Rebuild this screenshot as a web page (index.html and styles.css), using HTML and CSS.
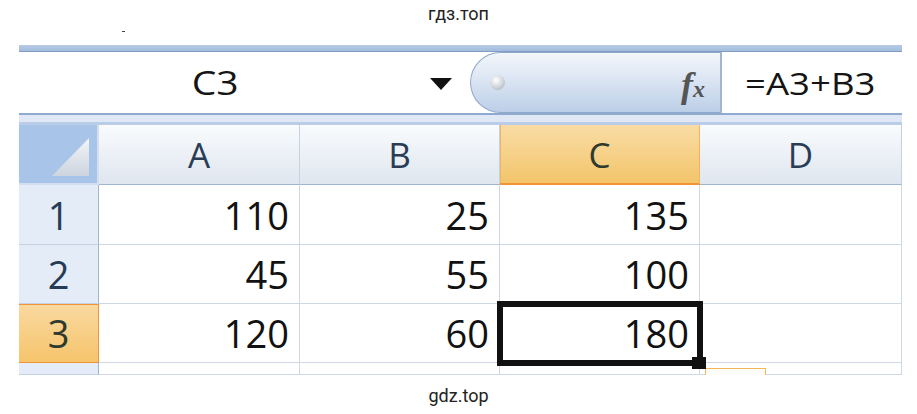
FILE: index.html
```html
<!DOCTYPE html>
<html lang="ru">
<head>
  <meta charset="UTF-8" />
  <meta name="viewport" content="width=device-width, initial-scale=1" />
  <title>гдз.топ — формула в ячейке C3</title>
  <link rel="stylesheet" href="styles.css">
</head>
<body>

  <div class="head">
    <div class="site-mark">гдз.топ</div>
    <div class="tick"></div>
  </div>

  <div class="sheet">
    <div class="topbar"></div>

    <!-- Name box + formula bar -->
    <div class="formula-bar">
      <div class="name-box"><span class="wide">C3</span></div>
      <div class="name-arrow"><span class="arrow"></span></div>
      <div class="fx-pill">
        <span class="dot"></span>
        <span class="fx">f<span class="fx-x">x</span></span>
      </div>
      <div class="formula"><span class="wide">=A3+B3</span></div>
    </div>

    <div class="band"></div>

    <!-- Grid -->
    <div class="grid">
      <div class="corner"><span class="corner-tri"></span></div>
      <div class="ch">A</div>
      <div class="ch">B</div>
      <div class="ch active">C</div>
      <div class="ch">D</div>

      <div class="rh">1</div>
      <div class="cell">110</div>
      <div class="cell">25</div>
      <div class="cell">135</div>
      <div class="cell"></div>

      <div class="rh">2</div>
      <div class="cell">45</div>
      <div class="cell">55</div>
      <div class="cell">100</div>
      <div class="cell"></div>

      <div class="rh active">3</div>
      <div class="cell">120</div>
      <div class="cell">60</div>
      <div class="cell selected">180</div>
      <div class="cell"></div>

      <div class="rh"></div>
      <div class="cell"></div>
      <div class="cell"></div>
      <div class="cell"></div>
      <div class="cell"></div>

      <!-- autofill options button, mostly cut off -->
      <div class="fill-options"></div>
    </div>
  </div>

  <div class="site-mark foot">gdz.top</div>

</body>
</html>
```

FILE: styles.css
```css
body {
  margin: 0;
  background: #fff;
  font-family: "Open Sans", "Liberation Sans", sans-serif;
}
.site-mark {
  font-family: Roboto, "Liberation Sans", sans-serif;
  font-size: 18px;
  line-height: 21px;
  color: #222;
  text-align: center;
}
.head {
  height: 45px;
  padding-top: 3px;
  box-sizing: border-box;
}
.tick {
  width: 3px;
  height: 1px;
  margin: 7px 0 0 122px;
  background: #444;
}
.foot {
  margin-top: 10px;
}

.sheet {
  width: 883px;
  margin-left: 19px;
  overflow: hidden;
}
.topbar {
  height: 6px;
  background: linear-gradient(#b7cbe6, #a3bcdd);
  border-bottom: 1px solid #7f9dc5;
}

/* Formula bar */
.formula-bar {
  display: flex;
  height: 61px;
  background: #fff;
}
.wide {
  display: inline-block;
  transform: scaleX(1.22);
}
.name-box {
  width: 392px;
  display: flex;
  align-items: center;
  justify-content: center;
  font-size: 32px;
  color: #151515;
}
.name-arrow {
  width: 59px;
  display: flex;
  align-items: center;
  justify-content: center;
  padding-top: 2px;
  box-sizing: border-box;
}
.arrow {
  width: 0;
  height: 0;
  border-left: 11px solid transparent;
  border-right: 11px solid transparent;
  border-top: 12px solid #111;
}
.fx-pill {
  width: 250px;
  display: flex;
  align-items: center;
  justify-content: space-between;
  padding: 0 15px 0 19px;
  box-sizing: border-box;
  border: 1px solid #90a9cb;
  border-right: none;
  border-radius: 31px 0 0 31px;
  background: linear-gradient(#f2f6fb, #dbe5f3 45%, #bccfe8);
}
.dot {
  width: 15px;
  height: 15px;
  border-radius: 50%;
  background: radial-gradient(circle at 40% 35%, #ffffff, #cfd3d9 55%, #9ea4ad);
}
.fx {
  font-family: "Liberation Serif", serif;
  font-style: italic;
  font-weight: bold;
  font-size: 36px;
  color: #555;
  line-height: 1;
  margin-top: 4px;
}
.fx-x {
  font-size: 24px;
}
.formula {
  flex: 1;
  display: flex;
  align-items: center;
  padding-left: 33px;
  border-left: 2px solid #a3b6cf;
  font-size: 31px;
  color: #141414;
}
.formula .wide {
  transform: scaleX(1.18);
}

.band {
  height: 12px;
  background: linear-gradient(#8eaacf 0 2px, #dfe8f4 2px 9px, #b9cde8 9px);
}

/* Sheet grid */
.grid {
  position: relative;
  display: grid;
  grid-template-columns: 80px 201px 200px 200px 202px;
  grid-template-rows: 60px 60px 59px 59px 12px;
}
.grid > div {
  box-sizing: border-box;
  display: flex;
  align-items: center;
}
.corner {
  justify-content: flex-end;
  align-items: flex-end !important;
  padding: 0 8px 7px 0;
  background: #a9c4e9;
  border-right: 2px solid #d2dff0;
  border-bottom: 2px solid #d2dff0;
}
.corner-tri {
  width: 37px;
  height: 38px;
  clip-path: polygon(100% 0, 100% 100%, 0 100%);
  background: linear-gradient(#f3f5f8, #cdd4de);
}
.ch {
  justify-content: center;
  font-size: 35px;
  color: #2a3d57;
  background: linear-gradient(#f9fbfd, #dfe6ef);
  border-right: 1px solid #c5d2e3;
  border-bottom: 1px solid #9eb6ce;
}
.ch.active {
  color: #2f3a2e;
  background: linear-gradient(#f9dca5, #f3c56b);
  border-right: 1px solid #f0b45c;
  border-bottom: 2px solid #f29436;
  box-shadow: inset 1px 0 #f0b45c;
}
.rh {
  justify-content: center;
  font-size: 38px;
  color: #263b55;
  background: #e4ecf7;
  border-right: 1px solid #9eb6ce;
  border-bottom: 1px solid #c5d2e3;
}
.rh.active {
  color: #2f3a2e;
  background: linear-gradient(#f9d9a0, #f6c46c);
  border-right: 1px solid #f29436;
  border-bottom: 1px solid #f29436;
  box-shadow: inset 0 1px #f29436;
}
.cell {
  justify-content: flex-end;
  padding-right: 10px;
  font-size: 38px;
  color: #111;
  background: #fff;
  border-right: 1px solid #d0d7e5;
  border-bottom: 1px solid #d0d7e5;
}
.cell.selected {
  position: relative;
}
.cell.selected::after {
  content: "";
  position: absolute;
  top: -3px;
  left: -3px;
  right: -4px;
  bottom: -4px;
  border: 6px solid #111;
  z-index: 2;
}
.cell.selected::before {
  content: "";
  position: absolute;
  right: -7px;
  bottom: -7px;
  width: 14px;
  height: 12px;
  background: #111;
  z-index: 3;
}
.fill-options {
  position: absolute;
  left: 686px;
  top: 243px;
  width: 61px;
  height: 22px;
  border: 1px solid #f5b657;
  background: #fffdf8;
}
```
